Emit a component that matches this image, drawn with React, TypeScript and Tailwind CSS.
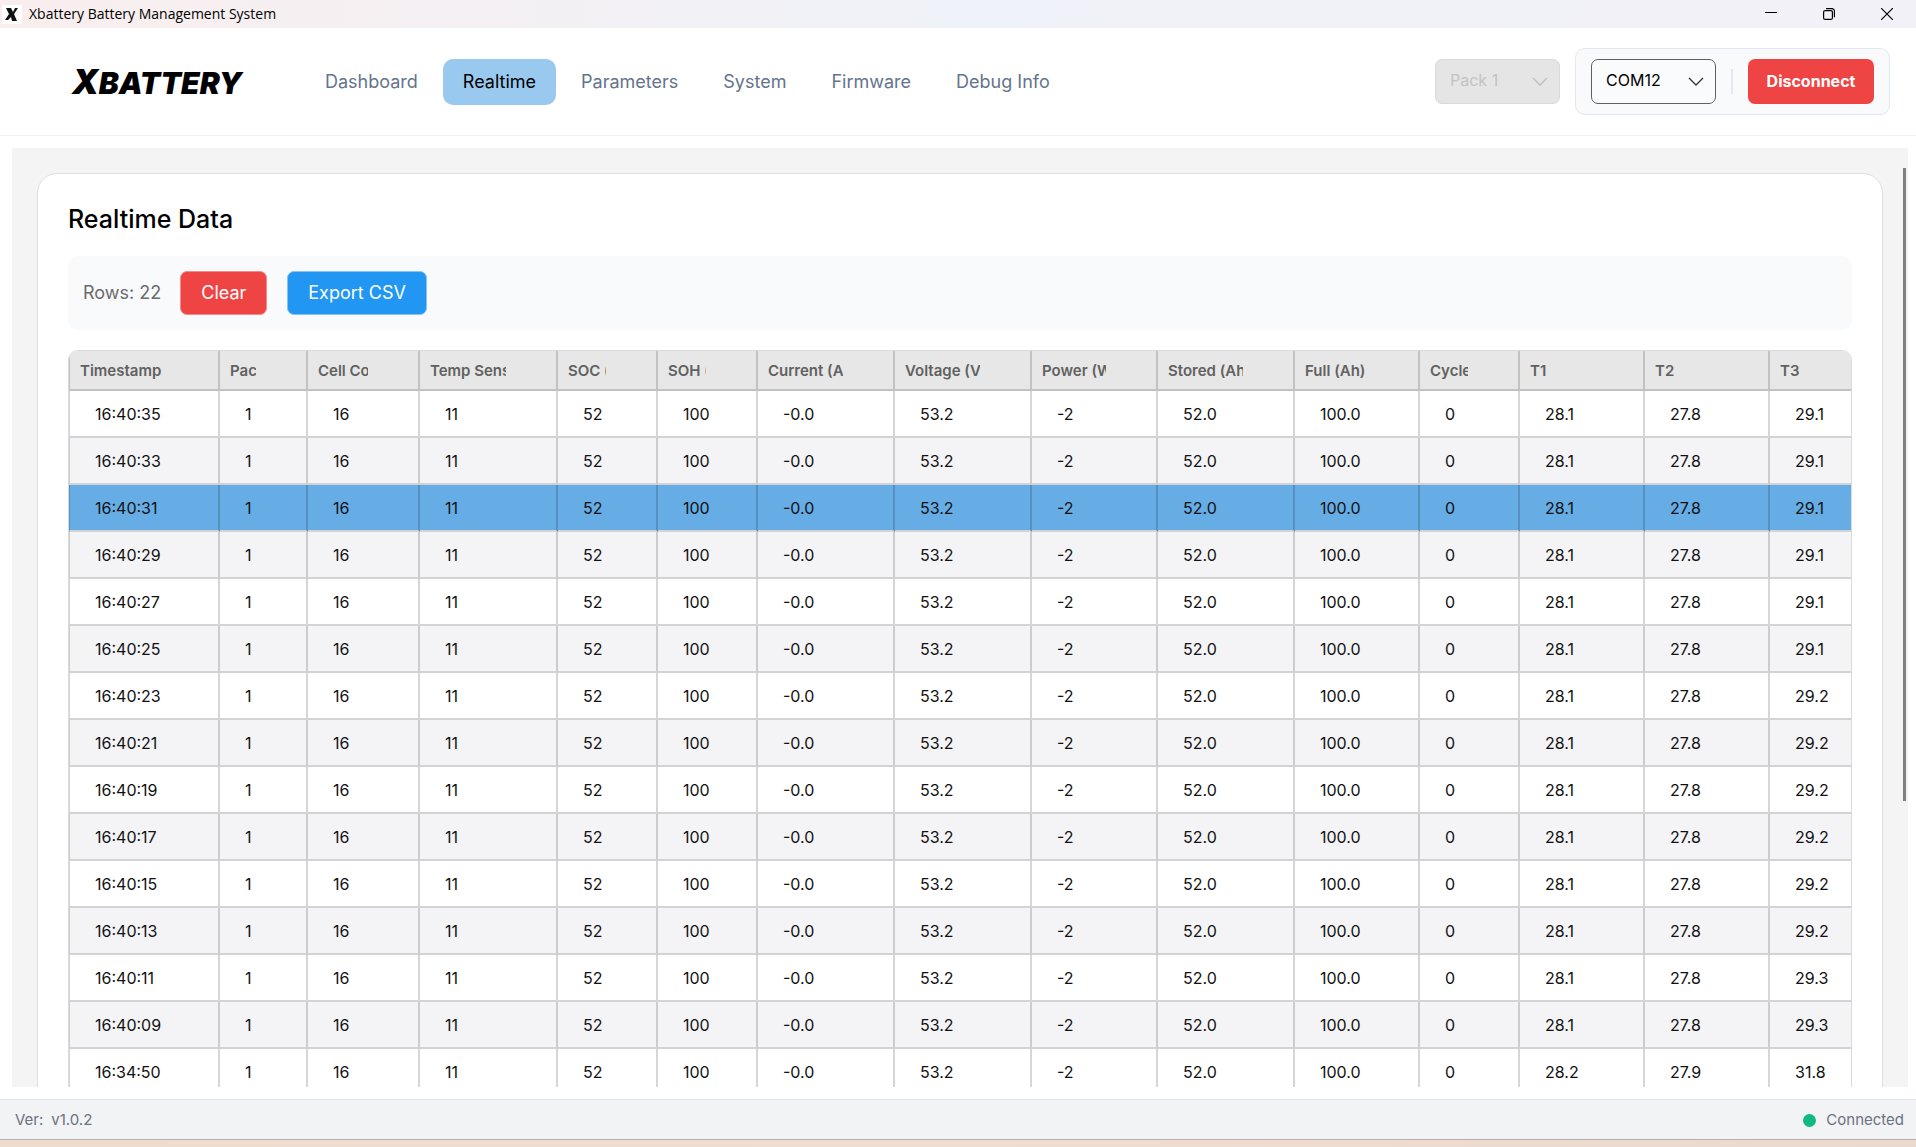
import { useState } from 'react';
import clsx from 'clsx';

interface Column {
  label: string;
  width: string;
}

interface Sample {
  time: string;
  t1: string;
  t2: string;
  t3: string;
}

const NAV_ITEMS = ['Dashboard', 'Realtime', 'Parameters', 'System', 'Firmware', 'Debug Info'];

const COLUMNS: Column[] = [
  { label: 'Timestamp', width: 'w-[151px]' },
  { label: 'Pack', width: 'w-[88px]' },
  { label: 'Cell Count', width: 'w-[112px]' },
  { label: 'Temp Sensors', width: 'w-[138px]' },
  { label: 'SOC (%)', width: 'w-[100px]' },
  { label: 'SOH (%)', width: 'w-[100px]' },
  { label: 'Current (A)', width: 'w-[137px]' },
  { label: 'Voltage (V)', width: 'w-[137px]' },
  { label: 'Power (W)', width: 'w-[126px]' },
  { label: 'Stored (Ah)', width: 'w-[137px]' },
  { label: 'Full (Ah)', width: 'w-[125px]' },
  { label: 'Cycles', width: 'w-[100px]' },
  { label: 'T1', width: 'w-[125px]' },
  { label: 'T2', width: 'w-[125px]' },
  { label: 'T3', width: '' },
];

const SAMPLES: Sample[] = [
  { time: '16:40:35', t1: '28.1', t2: '27.8', t3: '29.1' },
  { time: '16:40:33', t1: '28.1', t2: '27.8', t3: '29.1' },
  { time: '16:40:31', t1: '28.1', t2: '27.8', t3: '29.1' },
  { time: '16:40:29', t1: '28.1', t2: '27.8', t3: '29.1' },
  { time: '16:40:27', t1: '28.1', t2: '27.8', t3: '29.1' },
  { time: '16:40:25', t1: '28.1', t2: '27.8', t3: '29.1' },
  { time: '16:40:23', t1: '28.1', t2: '27.8', t3: '29.2' },
  { time: '16:40:21', t1: '28.1', t2: '27.8', t3: '29.2' },
  { time: '16:40:19', t1: '28.1', t2: '27.8', t3: '29.2' },
  { time: '16:40:17', t1: '28.1', t2: '27.8', t3: '29.2' },
  { time: '16:40:15', t1: '28.1', t2: '27.8', t3: '29.2' },
  { time: '16:40:13', t1: '28.1', t2: '27.8', t3: '29.2' },
  { time: '16:40:11', t1: '28.1', t2: '27.8', t3: '29.3' },
  { time: '16:40:09', t1: '28.1', t2: '27.8', t3: '29.3' },
  { time: '16:34:50', t1: '28.2', t2: '27.9', t3: '31.8' },
];

const toCells = (s: Sample) => [
  s.time, '1', '16', '11', '52', '100', '-0.0', '53.2', '-2', '52.0', '100.0', '0', s.t1, s.t2, s.t3,
];

function TitleBar() {
  return (
    <div className="flex h-7 shrink-0 items-center bg-linear-to-r from-[#f9eeee] via-[#eff2f8] to-[#f2f1f7] pl-[2px] font-['Open_Sans',sans-serif] text-black">
      <svg className="h-[19px] w-5 bg-white" viewBox="0 0 20 19">
        <path d="M4 3h5l2 4 2-4h3l-4 6 3 7h-5l-1-4-3 3H3l4-6z" fill="#111" />
      </svg>
      <span className="ml-[7px] text-sm">Xbattery Battery Management System</span>
      <div className="ml-auto flex h-full">
        <button aria-label="Minimize" className="flex w-[58px] items-center justify-center">
          <svg className="size-3" viewBox="0 0 12 12" stroke="#000">
            <path d="M0 4.5h12" />
          </svg>
        </button>
        <button aria-label="Restore" className="flex w-[58px] items-center justify-center">
          <svg className="size-3" viewBox="0 0 12 12" fill="none" stroke="#000" strokeWidth="1.2">
            <rect x=".6" y="2.6" width="8.8" height="8.8" rx="1.5" />
            <path d="M3 .6h6a2.4 2.4 0 0 1 2.4 2.4v6.2" />
          </svg>
        </button>
        <button aria-label="Close" className="flex w-[58px] items-center justify-center">
          <svg className="size-3" viewBox="0 0 12 12" stroke="#000" strokeWidth="1.2">
            <path d="M0 0l12 12M12 0L0 12" />
          </svg>
        </button>
      </div>
    </div>
  );
}

function Dropdown({ label, value, disabled }: { label: string; value: string; disabled?: boolean }) {
  return (
    <div className="relative">
      <select
        aria-label={label}
        disabled={disabled}
        defaultValue={value}
        className={clsx(
          'h-[45px] w-[125px] appearance-none rounded-[7px] border pb-1 pl-[14px] text-base opacity-100',
          disabled ? 'border-[#d9d9d9] bg-[#e5e5e5] text-[#c3c3c3]' : 'border-[#5d5f62] bg-[#fafbfd] text-black',
        )}
      >
        <option>{value}</option>
      </select>
      <svg
        className={clsx(
          'pointer-events-none absolute top-[18px] right-3 h-[9px] w-4',
          disabled ? 'text-[#bdbdbd]' : 'text-[#333]',
        )}
        viewBox="0 0 16 9"
        fill="none"
        stroke="currentColor"
        strokeWidth="1.3"
      >
        <path d="M1 1l7 7 7-7" />
      </svg>
    </div>
  );
}

export default function App() {
  const [tab, setTab] = useState('Realtime');
  const [selected, setSelected] = useState(2);

  return (
    <div className="flex h-screen flex-col overflow-hidden bg-white font-['Inter',sans-serif]">
      <TitleBar />

      <header className="flex h-[108px] shrink-0 items-center border-b border-[#f1f1f1] pr-[26px] pl-[72px]">
        <div className="flex w-[172px] items-baseline text-[30px] leading-none font-black whitespace-nowrap text-black italic">
          <span className="text-[34px] leading-none">X</span>BATTERY
        </div>

        <nav className="ml-[61px] flex gap-[5px]">
          {NAV_ITEMS.map((item) => (
            <button
              key={item}
              onClick={() => setTab(item)}
              className={clsx(
                'h-[46px] rounded-[10px] px-5 text-lg whitespace-nowrap',
                item === tab ? 'bg-[#9ac9f0] text-black' : 'text-[#64748b]',
              )}
            >
              {item}
            </button>
          ))}
        </nav>

        <div className="ml-auto flex items-center gap-[15px]">
          <Dropdown label="Pack" value="Pack 1" disabled />
          <div className="flex h-[67px] items-center rounded-[10px] border border-[#e2e8f0] bg-[#f9fafc] px-[15px]">
            <Dropdown label="Port" value="COM12" />
            <div className="mx-[15px] h-[25px] w-[2px] bg-[#e2e8f0]" />
            <button className="h-[45px] w-[126px] rounded-[7px] bg-[#ef4444] pb-[2px] text-base font-bold text-white">
              Disconnect
            </button>
          </div>
        </div>
      </header>

      <main className="relative mt-3 mr-2 mb-3 ml-3 min-h-0 flex-1 overflow-hidden bg-[#f4f4f4] p-[25px]">
        <div className="rounded-[20px] border border-[#dfdfdf] bg-white px-[30px] py-[30px]">
          <h1 className="pb-[2px] text-[25px] leading-[30px] font-medium text-black">Realtime Data</h1>

          <div className="mt-5 flex h-[74px] items-center rounded-[10px] bg-[#f9fafc] px-[15px]">
            <span className="text-lg text-[#6b6b6b]">Rows: 22</span>
            <button className="ml-[19px] h-11 rounded-[7px] border border-[#f58a8a] bg-[#ef4444] px-5 text-lg text-white">
              Clear
            </button>
            <button className="ml-5 h-11 rounded-[7px] border border-[#86c4f8] bg-[#2196f3] px-5 text-lg text-white">
              Export CSV
            </button>
          </div>

          <div className="mt-5 overflow-hidden rounded-[10px] border border-[#dadada]">
            <table className="w-full table-fixed border-separate border-spacing-0 text-left">
              <thead>
                <tr className="bg-[#e7e7e7]">
                  {COLUMNS.map(({ label, width }) => (
                    <th
                      key={label}
                      className={clsx(
                        'h-10 border-r-2 border-b-2 border-black/16 p-0 pt-[2px] text-[15px] font-semibold text-[#616161] first:border-l last:border-r-0',
                        width,
                      )}
                    >
                      <div className="mr-[50px] ml-[10px] overflow-hidden whitespace-nowrap">{label}</div>
                    </th>
                  ))}
                </tr>
              </thead>
              <tbody>
                {SAMPLES.map((sample, i) => (
                  <tr
                    key={sample.time}
                    onClick={() => setSelected(i)}
                    className={clsx(i === selected ? 'bg-[#66ace5]' : i % 2 ? 'bg-[#f4f4f7]' : 'bg-white')}
                  >
                    {toCells(sample).map((cell, c) => (
                      <td
                        key={c}
                        className="h-[47px] border-r-2 border-b-2 border-r-black/16 border-b-[#d3d3d5] p-0 pl-[25px] text-base text-[#111] first:border-l first:border-l-black/16 last:border-r-0"
                      >
                        {cell}
                      </td>
                    ))}
                  </tr>
                ))}
              </tbody>
            </table>
          </div>
        </div>
        <div className="absolute top-5 right-[2px] h-[633px] w-[3px] bg-[#808080]" />
      </main>

      <footer className="flex h-10 shrink-0 items-center border-t border-[#e5e7eb] bg-[#f2f3f5] pt-[2px] pr-3 pl-[15px] text-[15px] text-[#6b7280]">
        <span>Ver:</span>
        <span className="ml-2">v1.0.2</span>
        <span className="ml-auto size-[13px] rounded-full bg-[#10b981]" />
        <span className="ml-[10px]">Connected</span>
      </footer>
      <div className="h-2 shrink-0 border-t border-[#b5afab] bg-linear-to-r from-[#efdccd] via-[#f0ddd0] to-[#ecd9cd]" />
    </div>
  );
}
